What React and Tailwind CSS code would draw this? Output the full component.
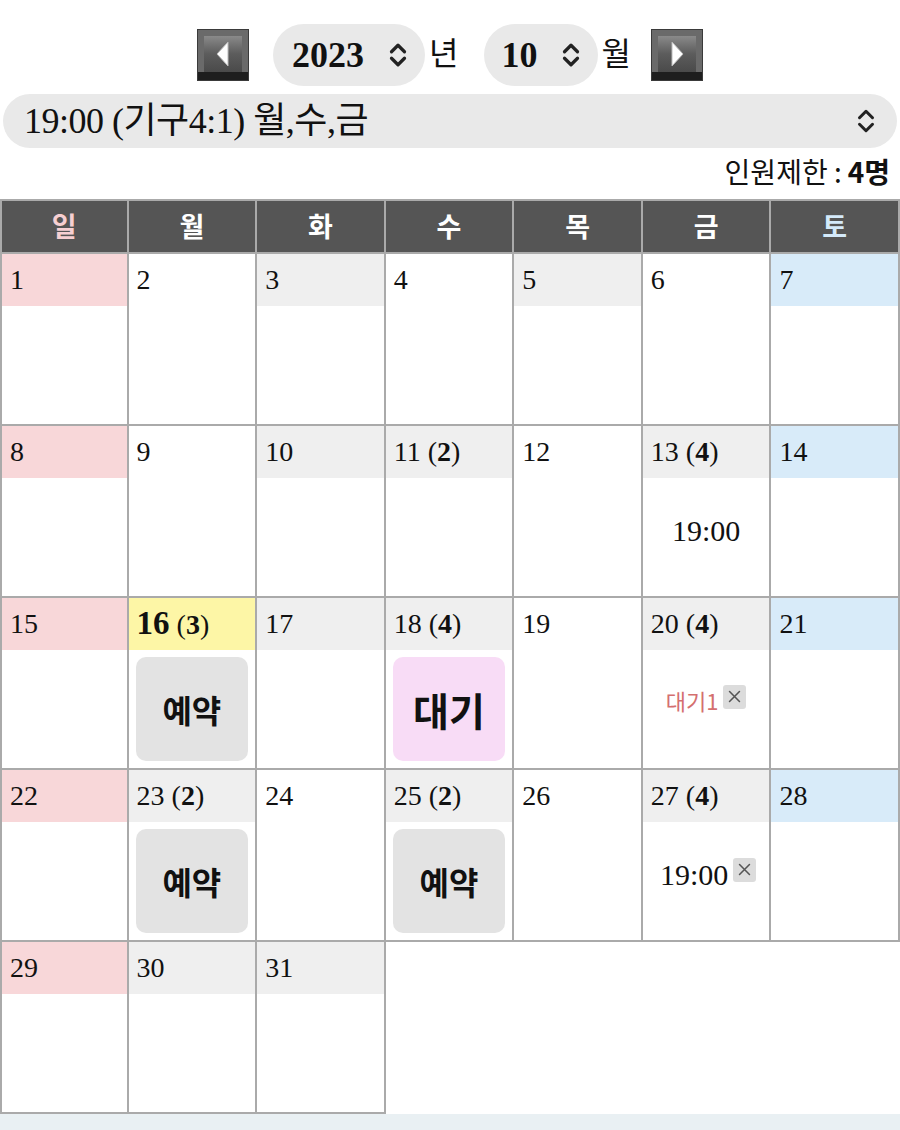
import React from "react";

const SERIF = { fontFamily: '"Liberation Serif", "Noto Sans CJK KR", serif' };
const SANS = { fontFamily: '"Noto Sans CJK KR", "Noto Sans", sans-serif' };

function UpDown({ size = 26, sw = 3 }) {
  return (
    <svg width={size} height={size} viewBox="0 0 24 24" fill="none" stroke="#222" strokeWidth={sw} strokeLinecap="round" strokeLinejoin="round">
      <path d="m6 9 6-6 6 6" />
      <path d="m6 15 6 6 6-6" />
    </svg>
  );
}

function ArrowBtn({ dir }) {
  return (
    <div className="w-[52px] h-[52px] flex flex-col overflow-hidden border border-[#3a3a3a]">
      <div className="flex-1 flex items-center justify-center bg-gradient-to-b from-[#8a8a8a] via-[#5c5c5c] to-[#4a4a4a] border-x-[6px] border-t-[6px] border-[#6a6a6a]">
        <svg width="16" height="26" viewBox="0 0 16 26">
          {dir === "left" ? (
            <polygon points="13,1 13,25 2,13" fill="#fff" stroke="#bbb" strokeWidth="1" />
          ) : (
            <polygon points="3,1 3,25 14,13" fill="#fff" stroke="#bbb" strokeWidth="1" />
          )}
        </svg>
      </div>
      <div className="h-[8px] bg-[#1e1e1e]" />
    </div>
  );
}

function XBox() {
  return (
    <span className="inline-flex items-center justify-center w-[23px] h-[24px] bg-[#dcdcdc] rounded-[3px] ml-[5px]">
      <svg width="17" height="17" viewBox="0 0 24 24" fill="none" stroke="#555" strokeWidth="2.2" strokeLinecap="round">
        <path d="M5 5l14 14M19 5L5 19" />
      </svg>
    </span>
  );
}

const cells = [
  { d: 1, bg: "bg-[#f8d7d9]" },
  { d: 2, bg: "bg-white" },
  { d: 3, bg: "bg-[#efefef]" },
  { d: 4, bg: "bg-white" },
  { d: 5, bg: "bg-[#efefef]" },
  { d: 6, bg: "bg-white" },
  { d: 7, bg: "bg-[#d8ebf9]" },
  { d: 8, bg: "bg-[#f8d7d9]" },
  { d: 9, bg: "bg-white" },
  { d: 10, bg: "bg-[#efefef]" },
  { d: 11, c: 2, bg: "bg-[#efefef]" },
  { d: 12, bg: "bg-white" },
  { d: 13, c: 4, bg: "bg-[#efefef]", body: "time" },
  { d: 14, bg: "bg-[#d8ebf9]" },
  { d: 15, bg: "bg-[#f8d7d9]" },
  { d: 16, c: 3, bg: "bg-[#fdf6a6]", today: true, body: "reserve" },
  { d: 17, bg: "bg-[#efefef]" },
  { d: 18, c: 4, bg: "bg-[#efefef]", body: "wait" },
  { d: 19, bg: "bg-white" },
  { d: 20, c: 4, bg: "bg-[#efefef]", body: "wait1" },
  { d: 21, bg: "bg-[#d8ebf9]" },
  { d: 22, bg: "bg-[#f8d7d9]" },
  { d: 23, c: 2, bg: "bg-[#efefef]", body: "reserve" },
  { d: 24, bg: "bg-white" },
  { d: 25, c: 2, bg: "bg-[#efefef]", body: "reserve" },
  { d: 26, bg: "bg-white" },
  { d: 27, c: 4, bg: "bg-[#efefef]", body: "timex" },
  { d: 28, bg: "bg-[#d8ebf9]" },
  { d: 29, bg: "bg-[#f8d7d9]" },
  { d: 30, bg: "bg-[#efefef]" },
  { d: 31, bg: "bg-[#efefef]" },
];

function Body({ type }) {
  if (type === "reserve")
    return (
      <div className="h-full p-[7px]">
        <div className="h-full w-full rounded-[10px] bg-[#e3e3e3] flex items-center justify-center text-[32px] font-bold text-[#111]" style={SANS}>
          예약
        </div>
      </div>
    );
  if (type === "wait")
    return (
      <div className="h-full p-[7px]">
        <div className="h-full w-full rounded-[10px] bg-[#f8dcf6] flex items-center justify-center text-[39px] font-bold text-[#111]" style={SANS}>
          대기
        </div>
      </div>
    );
  if (type === "time")
    return (
      <div className="h-full flex items-center justify-center pb-[14px] text-[30px] text-[#111]" style={SERIF}>
        19:00
      </div>
    );
  if (type === "timex")
    return (
      <div className="h-full flex items-center justify-center pb-[14px] pl-[4px]">
        <span className="text-[30px] text-[#111]" style={SERIF}>19:00</span>
        <span className="mt-[-6px]"><XBox /></span>
      </div>
    );
  if (type === "wait1")
    return (
      <div className="h-full flex items-center justify-center pb-[18px]">
        <span className="text-[22px] text-[#d46f6f]" style={SANS}>대기1</span>
        <span className="mt-[-4px]"><XBox /></span>
      </div>
    );
  return null;
}

export default function App() {
  const heads = ["일", "월", "화", "수", "목", "금", "토"];
  return (
    <div className="w-[900px] min-h-[1130px] bg-[#e9f0f3]">
      <div className="bg-white">
        <div className="pt-[24px] flex items-center justify-center h-[86px]">
          <ArrowBtn dir="left" />
          <div className="ml-[24px] w-[152px] h-[62px] rounded-full bg-[#e9e9e9] flex items-center pl-[19px] pr-[14px] justify-between">
            <span className="text-[36px] font-bold text-[#111]" style={SERIF}>2023</span>
            <UpDown />
          </div>
          <span className="ml-[4px] text-[32px] text-[#111] mt-[-8px]" style={SANS}>년</span>
          <div className="ml-[25px] w-[114px] h-[62px] rounded-full bg-[#e9e9e9] flex items-center pl-[18px] pr-[14px] justify-between">
            <span className="text-[36px] font-bold text-[#111]" style={SERIF}>10</span>
            <UpDown />
          </div>
          <span className="ml-[4px] text-[32px] text-[#111] mt-[-8px]" style={SANS}>월</span>
          <div className="ml-[20px]">
            <ArrowBtn dir="right" />
          </div>
        </div>
        <div className="mt-[8px] mx-[3px] h-[54px] rounded-full bg-[#e9e9e9] flex items-center justify-between pl-[21px] pr-[18px]">
          <span className="text-[36px] text-[#111] tracking-[-0.5px]" style={SERIF}>19:00 (기구4:1) 월,수,금</span>
          <UpDown size={26} sw={2.8} />
        </div>
        <div className="h-[51px] flex items-center justify-end pr-[10px] pb-[6px] text-[28px] text-[#111]" style={SANS}>
          <span>인원제한 : </span>
          <span className="font-bold ml-[6px]">4명</span>
        </div>
        <div className="grid grid-cols-7">
          {heads.map((h, i) => (
            <div
              key={h}
              className={`h-[55px] bg-[#555555] border-t-2 border-b-2 border-r-2 border-[#aaaaaa] ${i === 0 ? "border-l-2" : ""} flex items-center justify-center text-[27px] font-bold ${i === 0 ? "text-[#f6cfd2]" : i === 6 ? "text-[#d4eafa]" : "text-white"}`}
              style={SANS}
            >
              {h}
            </div>
          ))}
          {cells.map((c, i) => (
            <div
              key={c.d}
              className={`h-[172px] border-r-2 border-b-2 border-[#aaaaaa] ${i % 7 === 0 ? "border-l-2" : ""} bg-white flex flex-col`}
            >
              <div className={`h-[52px] ${c.bg} flex items-center pl-[8px] text-[28px] text-[#111]`} style={SERIF}>
                {c.today ? (
                  <span>
                    <span className="font-bold text-[33px]">{c.d}</span>{" "}
                    <span>(<b>{c.c}</b>)</span>
                  </span>
                ) : c.c ? (
                  <span>
                    {c.d} (<b>{c.c}</b>)
                  </span>
                ) : (
                  <span>{c.d}</span>
                )}
              </div>
              <div className="flex-1">
                <Body type={c.body} />
              </div>
            </div>
          ))}
          {[0, 1, 2, 3].map((k) => (
            <div key={"e" + k} className="h-[172px] bg-white" />
          ))}
        </div>
      </div>
    </div>
  );
}
